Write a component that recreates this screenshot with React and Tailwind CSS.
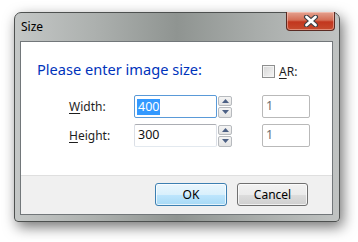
import React from "react";

const Spinner = () => (
    <div className="flex flex-col gap-px w-[14px] h-[22px]">
        {["up", "down"].map((dir) => (
            <div
                key={dir}
                className="flex-1 flex items-center justify-center border border-[#b7babe] rounded-[2px] bg-[linear-gradient(#f4f4f4,#e4e4e4)]"
            >
                <svg width="7" height="4" viewBox="0 0 7 4">
                    {dir === "up" ? (
                        <polygon points="3.5,0 7,4 0,4" fill="#4c6085" />
                    ) : (
                        <polygon points="0,0 7,0 3.5,4" fill="#4c6085" />
                    )}
                </svg>
            </div>
        ))}
    </div>
);

// plain text box; "ratio" boxes are the greyed ones on the right
const Edit = ({ value, focused, ratio, className }) => {
    let border = "border-t-[#abadb3] border-x-[#dbdfe6] border-b-[#e3e9ef]";
    if (focused) border = "border-[#5a9ad8]";
    if (ratio) border = "border-[#b9b9b9]";
    return (
        <div
            className={
                "h-[23px] flex items-center pl-[2px] border rounded-[2px] bg-white text-[12.5px] " +
                border + " " + className
            }
        >
            {focused ? (
                <span className="bg-[#3399ff] text-white leading-[16px] px-px">{value}</span>
            ) : (
                <span className={ratio ? "text-[#6d6d6d] px-px" : "text-[#111] px-px"}>{value}</span>
            )}
        </div>
    );
};

const Row = ({ accel, rest, value, focused }) => (
    <div className="flex items-center h-[23px] pl-[48px]">
        <span className="w-[65px] text-[12px] text-[#1e1e1e]">
            <span className="underline underline-offset-2">{accel}</span>
            {rest}
        </span>
        <Edit value={value} focused={focused} className="w-[83px]" />
        <div className="ml-px">
            <Spinner />
        </div>
        <Edit value="1" ratio className="w-[48px] ml-[30px]" />
    </div>
);

const App = () => {
    return (
        <div
            className="w-[358px] h-[242px] bg-white pl-[14px] pt-[12px] overflow-hidden"
            style={{ fontFamily: '"Noto Sans", "Open Sans", sans-serif' }}
        >
            <div className="relative w-[326px] h-[210px] rounded-t-[7px] rounded-b-[4px] border border-[#4e5150] bg-[linear-gradient(90deg,#c4c7c6_0%,#acb0ae_25%,#8f9491_50%,#a9adab_75%,#c0c3c2_100%)] shadow-[3px_5px_14px_rgba(0,0,0,0.55)] flex flex-col">
                {/* title bar */}
                <div className="h-[28px] flex items-start justify-between pl-[6px] pr-[4px]">
                    <span className="mt-[6px] text-[12px] text-black leading-[16px]">Size</span>
                    <button className="w-[49px] h-[19px] -mt-px flex items-center justify-center rounded-b-[4px] border border-[#5a2a22] border-t-0 bg-[linear-gradient(#e4a290_0%,#d46e56_45%,#c2361e_55%,#c64b2e_100%)] shadow-[inset_0_0_0_1px_rgba(255,220,210,0.45)]">
                        <svg width="16" height="12" viewBox="0 0 16 12">
                            <path d="M3.5 2 L12.5 10 M12.5 2 L3.5 10" stroke="#3b3f45" strokeWidth="5" strokeLinecap="round" />
                            <path d="M3.5 2 L12.5 10 M12.5 2 L3.5 10" stroke="#ffffff" strokeWidth="2.8" strokeLinecap="round" />
                        </svg>
                    </button>
                </div>
                {/* client area */}
                <div className="ml-[5px] mr-[6px] h-[174px] border border-[#72777a] flex flex-col">
                    <div className="h-[133px] bg-white pt-[17px]">
                        <div className="flex items-start h-[20px]">
                            <span className="ml-[16px] w-[225px] text-[14.6px] leading-[20px] text-[#0033bb]">
                                Please enter image size:
                            </span>
                            <div className="flex items-center gap-[4px] mt-[6px]">
                                <div className="w-[13px] h-[13px] border border-[#8e8f8f] bg-[linear-gradient(135deg,#d6d6d6,#f6f6f6)] shadow-[inset_0_0_0_1px_#f4f4f4]" />
                                <span className="text-[12px] leading-[13px] text-[#1e1e1e]">
                                    <span className="underline underline-offset-2">A</span>R:
                                </span>
                            </div>
                        </div>
                        <div className="mt-[16px] flex flex-col gap-[6px]">
                            <Row accel="W" rest="idth:" value="400" focused />
                            <Row accel="H" rest="eight:" value="300" />
                        </div>
                    </div>
                    <div className="flex-1 bg-[#f0f0f0] border-t border-[#dfdfdf] flex justify-end items-start gap-[10px] pt-[7px] pr-[24px]">
                        <button className="w-[72px] h-[23px] rounded-[3px] border border-[#3c7fb1] bg-[linear-gradient(#eaf6fd_0%,#d9f0fc_50%,#bee6fd_51%,#a7d9f5_100%)] shadow-[inset_0_0_0_1px_rgba(255,255,255,0.7)] text-[12px] text-black">
                            OK
                        </button>
                        <button className="w-[71px] h-[23px] rounded-[3px] border border-[#707070] bg-[linear-gradient(#f2f2f2_0%,#ebebeb_50%,#dddddd_51%,#cfcfcf_100%)] shadow-[inset_0_0_0_1px_rgba(255,255,255,0.7)] text-[12px] text-black">
                            Cancel
                        </button>
                    </div>
                </div>
            </div>
        </div>
    );
};

export default App;
